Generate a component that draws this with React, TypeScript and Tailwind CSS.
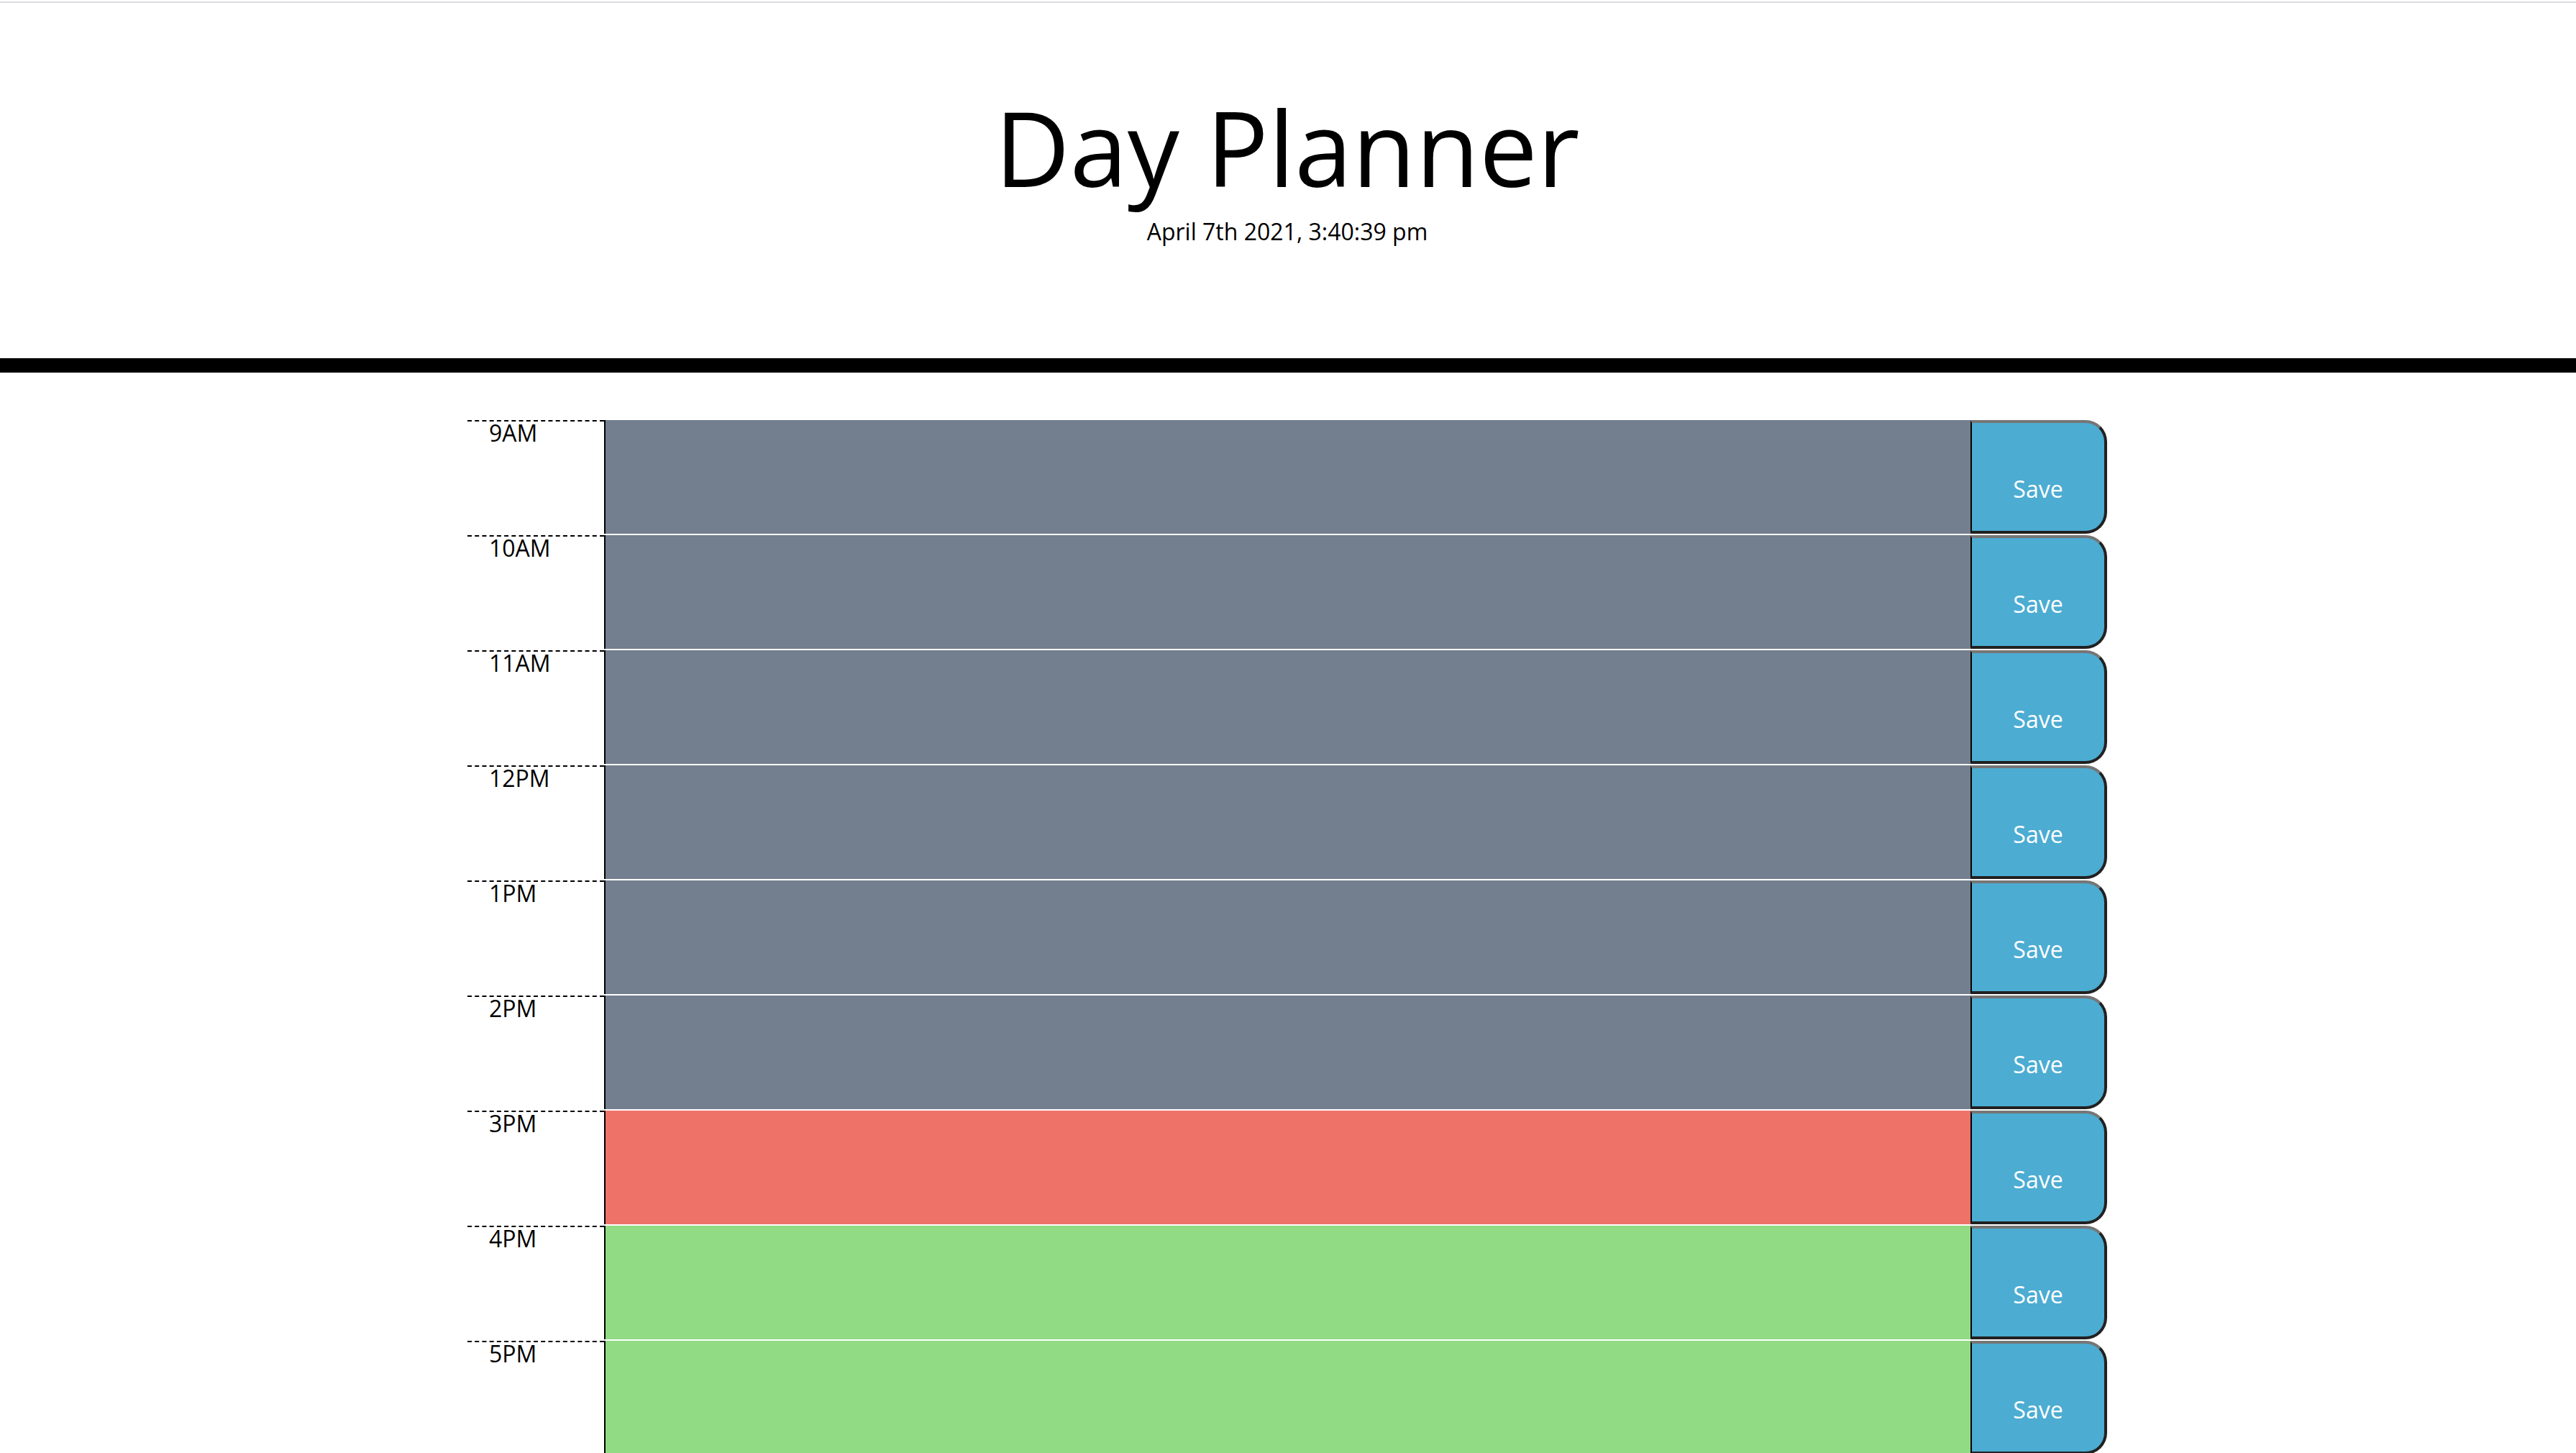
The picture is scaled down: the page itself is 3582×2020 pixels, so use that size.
type Period = "past" | "present" | "future";

const hours: { label: string; period: Period }[] = [
  { label: "9AM", period: "past" },
  { label: "10AM", period: "past" },
  { label: "11AM", period: "past" },
  { label: "12PM", period: "past" },
  { label: "1PM", period: "past" },
  { label: "2PM", period: "past" },
  { label: "3PM", period: "present" },
  { label: "4PM", period: "future" },
  { label: "5PM", period: "future" },
];

const periodClass: Record<Period, string> = {
  past: "bg-[#737f8e]",
  present: "bg-[#ee7268]",
  future: "bg-[#90db83]",
};

function TimeBlock({ label, period }: { label: string; period: Period }) {
  const id = `event-${label}`;
  return (
    <form
      className="grid h-40 grid-cols-12 pb-0.5"
      onSubmit={(e) => e.preventDefault()}
    >
      <label
        htmlFor={id}
        className="border-t-2 border-dashed border-black px-[30px]"
      >
        {label}
      </label>
      <textarea
        id={id}
        className={`col-span-10 h-full resize-none border-l-2 border-black px-[30px] text-white outline-none ${periodClass[period]}`}
      />
      <button
        type="submit"
        className="rounded-r-[30px] border-4 border-l-2 border-[#212121] border-t-[#767676] border-l-black bg-[#4cacd2] pt-[34px] text-white"
      >
        Save
      </button>
    </form>
  );
}

export default function App() {
  return (
    <div className="bg-white pt-0.5 font-['Open_Sans',sans-serif] text-[32px] leading-none text-black">
      <header className="border-t-2 border-b-20 border-t-[#dcdce2] border-b-black pt-[114px] pr-0.5 pb-40 text-center">
        <h1 className="mb-4 text-[144px] leading-[172px] font-normal">
          Day Planner
        </h1>
        <p>April 7th 2021, 3:40:39 pm</p>
      </header>
      <main className="pt-[66px] pr-0.5">
        <div className="mx-auto max-w-[2280px]">
          {hours.map((hour) => (
            <TimeBlock key={hour.label} {...hour} />
          ))}
        </div>
      </main>
    </div>
  );
}
